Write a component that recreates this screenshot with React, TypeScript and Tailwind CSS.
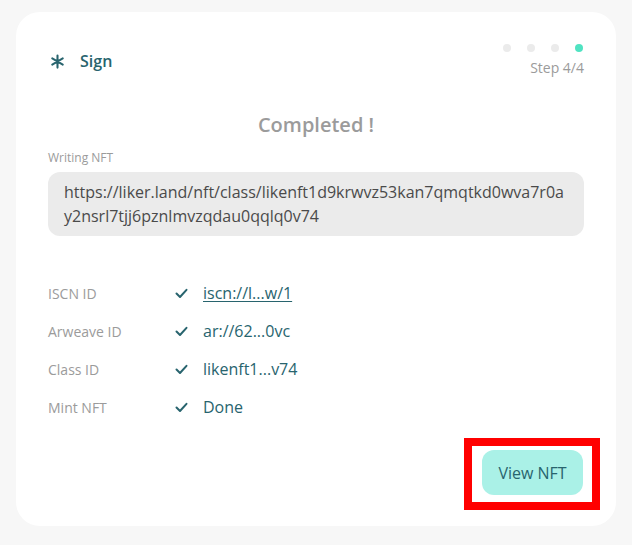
import React from "react"

const rows = [
  { label: "ISCN ID", value: "iscn://l...w/1", link: true },
  { label: "Arweave ID", value: "ar://62...0vc" },
  { label: "Class ID", value: "likenft1...v74" },
  { label: "Mint NFT", value: "Done" },
]

function Check() {
  return (
    <svg width="13" height="11" viewBox="0 0 13 11" fill="none" className="shrink-0">
      <path d="M1.5 5.5 L5 9 L11.5 1.8" stroke="#28646e" strokeWidth="2" strokeLinecap="round" strokeLinejoin="round" />
    </svg>
  )
}

function AsteriskIcon() {
  return (
    <svg width="15" height="15" viewBox="0 0 16 16" fill="none">
      <path d="M8 1.5v13M2.4 4.75l11.2 6.5M2.4 11.25l11.2-6.5" stroke="#28646e" strokeWidth="2.2" strokeLinecap="round" />
    </svg>
  )
}

export default function App() {
  return (
    <div
      className="min-h-screen bg-[#f7f7f7] pt-[12px] px-[16px] pb-[20px]"
      style={{ fontFamily: '"Open Sans", sans-serif' }}
    >
      <div className="bg-white rounded-[24px] px-[32px] pt-[32px] pb-[31px] flex flex-col">
        {/* HEADER */}
        <div className="flex justify-between items-center">
          <div className="flex items-center gap-[15px] pl-[2px]">
            <AsteriskIcon />
            <span className="text-[16px] font-semibold text-[#28646e] leading-6">Sign</span>
          </div>
          <div className="flex flex-col items-end gap-[6px]">
            <div className="flex gap-[16px] pr-[1px]">
              <div className="w-2 h-2 rounded-full bg-[#ebebeb]" />
              <div className="w-2 h-2 rounded-full bg-[#ebebeb]" />
              <div className="w-2 h-2 rounded-full bg-[#ebebeb]" />
              <div className="w-2 h-2 rounded-full bg-[#50e3c2]" />
            </div>
            <div className="text-[14px] leading-5 text-[#9b9b9b]">Step 4/4</div>
          </div>
        </div>

        <div className="mt-[32px] text-center text-[20px] leading-[30px] font-semibold text-[#9b9b9b]">
          Completed !
        </div>

        <div className="mt-[10px] text-[12px] leading-4 text-[#9b9b9b]">Writing NFT</div>
        <div className="mt-[6px] bg-[#ebebeb] rounded-[12px] px-[16px] py-[8px] text-[16px] leading-6 text-[#4a4a4a] break-all">
          https://liker.land/nft/class/likenft1d9krwvz53kan7qmqtkd0wva7r0ay2nsrl7tjj6pznlmvzqdau0qqlq0v74
        </div>

        {/* ROWS */}
        <div className="mt-[45px] flex flex-col gap-[14px]">
          {rows.map((r) => (
            <div key={r.label} className="flex items-center h-6">
              <div className="w-[127px] text-[14px] text-[#9b9b9b]">{r.label}</div>
              <Check />
              <div
                className={`ml-[15px] text-[16px] text-[#28646e] ${r.link ? "underline underline-offset-2" : ""}`}
              >
                {r.value}
              </div>
            </div>
          ))}
        </div>

        <div className="mt-[31px] flex justify-end pr-[1px]">
          <div className="relative">
            <button className="h-[45px] w-[101px] rounded-[12px] bg-[#aaf1e7] text-[16px] text-[#28646e]">
              View NFT
            </button>
            <div className="absolute -left-[18px] -right-[17px] -top-[12px] -bottom-[15px] border-[8px] border-[#ff0000] pointer-events-none" />
          </div>
        </div>
      </div>
    </div>
  )
}
